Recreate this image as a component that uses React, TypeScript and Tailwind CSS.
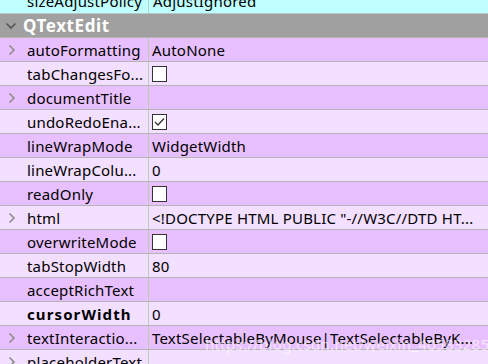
import React from "react";

type Row = { name: string; value?: string; check?: boolean; checked?: boolean; arrow?: boolean; bold?: boolean };

const rows: Row[] = [
  { name: "autoFormatting", value: "AutoNone", arrow: true },
  { name: "tabChangesFo...", check: true },
  { name: "documentTitle", arrow: true },
  { name: "undoRedoEna...", check: true, checked: true },
  { name: "lineWrapMode", value: "WidgetWidth" },
  { name: "lineWrapColu...", value: "0" },
  { name: "readOnly", check: true },
  { name: "html", value: "<!DOCTYPE HTML PUBLIC \"-//W3C//DTD HT...", arrow: true },
  { name: "overwriteMode", check: true },
  { name: "tabStopWidth", value: "80" },
  { name: "acceptRichText" },
  { name: "cursorWidth", value: "0", bold: true },
  { name: "textInteractio...", value: "TextSelectableByMouse|TextSelectableByK...", arrow: true },
  { name: "placeholderText", arrow: true },
];

function Chevron() {
  return (
    <svg width="8" height="12" viewBox="0 0 8 12" className="shrink-0">
      <path d="M1.5 1.5 L6 6 L1.5 10.5" fill="none" stroke="#8c8c8c" strokeWidth="1.6" />
    </svg>
  );
}

function Box({ checked }: { checked?: boolean }) {
  return (
    <div className="w-[15px] h-[16px] border border-[#333] bg-white flex items-center justify-center">
      {checked && (
        <svg width="11" height="10" viewBox="0 0 11 10">
          <path d="M1 5 L4 8 L10 1.5" fill="none" stroke="#333" strokeWidth="1.3" />
        </svg>
      )}
    </div>
  );
}

export default function App() {
  return (
    <div
      className="relative w-[488px] h-[364px] overflow-hidden bg-white text-[15px] text-black tracking-[0.2px]"
      style={{ fontFamily: '"Noto Sans", "Open Sans", sans-serif' }}
    >
      <div className="-mt-[10px] h-[24px] flex bg-[#c0ffff] border-b border-[#b0c8c8] leading-[22px]">
        <div className="w-[149px] pl-[27px] border-r border-[#b8d0c0]">sizeAdjustPolicy</div>
        <div className="pl-[4px]">AdjustIgnored</div>
      </div>
      <div className="h-[24px] flex items-center bg-[#a0a0a0] border-b border-[#b4b4b4]">
        <svg width="12" height="8" viewBox="0 0 12 8" className="ml-[5px] mr-[6px]">
          <path d="M1.5 1.5 L6 6 L10.5 1.5" fill="none" stroke="#555" strokeWidth="1.6" />
        </svg>
        <span className="font-bold text-white text-[17px] tracking-[0.6px] pt-[1px]">QTextEdit</span>
      </div>
      {rows.map((r, i) => (
        <div
          key={i}
          className={
            "h-[24px] flex border-b border-[#b4b4b4] " + (i % 2 === 0 ? "bg-[#e9c0ff]" : "bg-[#f3dfff]")
          }
        >
          <div className="w-[149px] shrink-0 flex items-center border-r border-[#b8ccb8] pl-[8px]">
            <div className="w-[19px]">{r.arrow && <Chevron />}</div>
            <span className={"whitespace-nowrap pt-[2px] " + (r.bold ? "font-bold tracking-[1.1px]" : "")}>{r.name}</span>
          </div>
          <div className="flex items-center pl-[3px] whitespace-nowrap">
            {r.check ? <Box checked={r.checked} /> : <span className="pt-[2px]">{r.value}</span>}
          </div>
        </div>
      ))}
      <div className="absolute left-[205px] top-[333px] text-[15px] text-white/60 whitespace-nowrap tracking-[0.3px] pointer-events-none">
        https://blog.csdn.net/weixin_40583285
      </div>
    </div>
  );
}
